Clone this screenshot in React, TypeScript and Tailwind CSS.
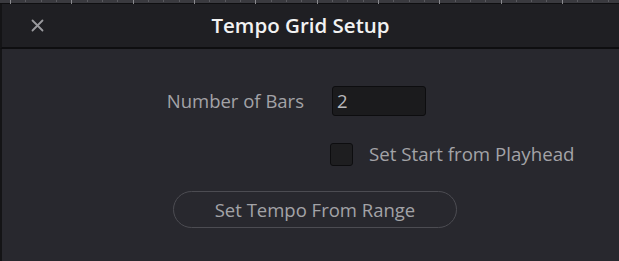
import React from "react";

const ticks = Array.from({ length: 40 }, (_, i) => i);

export default function App() {
  return (
    <div
      className="w-[619px] h-[261px] flex flex-col bg-[#28282e] overflow-hidden"
      style={{ fontFamily: '"Open Sans", "Noto Sans", sans-serif' }}
    >
      {/* ruler strip */}
      <div className="h-[4px] bg-[#3a3a3f] flex items-start justify-between px-[10px] border-b border-[#0f0f11]">
        {ticks.map((i) => (
          <div key={i} className={i % 4 === 0 ? "w-px h-[4px] bg-[#8a8a8e]" : "w-px h-[2px] bg-[#5a5a5f]"} />
        ))}
      </div>

      {/* header */}
      <div className="h-[45px] bg-[#1f1f23] border-l-2 border-[#141416] border-b-2 border-b-[#0e0e10] flex items-center relative">
        <button className="absolute left-[27px] top-[13px] w-[16px] h-[16px] flex items-center justify-center text-[#9a9a9e]">
          <svg width="13" height="13" viewBox="0 0 13 13" fill="none" stroke="currentColor" strokeWidth={1.8} strokeLinecap="round">
            <path d="M1.5 1.5l10 10M11.5 1.5l-10 10" />
          </svg>
        </button>
        <h1 className="flex-1 text-center text-[20.5px] font-semibold text-[#f2f2f2] pr-[20px]">Tempo Grid Setup</h1>
      </div>

      {/* body */}
      <div className="flex-1 border-l-2 border-[#141416] flex flex-col">
        <div className="flex items-center mt-[37px]">
          <span className="w-[302px] text-right text-[18.5px] text-[#a3a3a7]">Number of Bars</span>
          <div className="ml-[28px] w-[94px] h-[30px] bg-[#1b1b1d] border border-[#0d0d0f] rounded-[3px] flex items-center px-[4px] text-[18.5px] text-[#b8b8bb]">
            2
          </div>
        </div>

        <div className="flex items-center mt-[24px] ml-[328px]">
          <div className="w-[23px] h-[23px] bg-[#1e1e20] border border-[#0d0d0f] rounded-[3px]" />
          <span className="ml-[16px] text-[18.7px] text-[#a3a3a7]">Set Start from Playhead</span>
        </div>

        <div className="mt-[23px] ml-[171px]">
          <button className="w-[284px] h-[37px] rounded-full border border-[#4c4c52] text-[18.5px] text-[#a3a3a7] flex items-center justify-center">
            Set Tempo From Range
          </button>
        </div>
      </div>
    </div>
  );
}
